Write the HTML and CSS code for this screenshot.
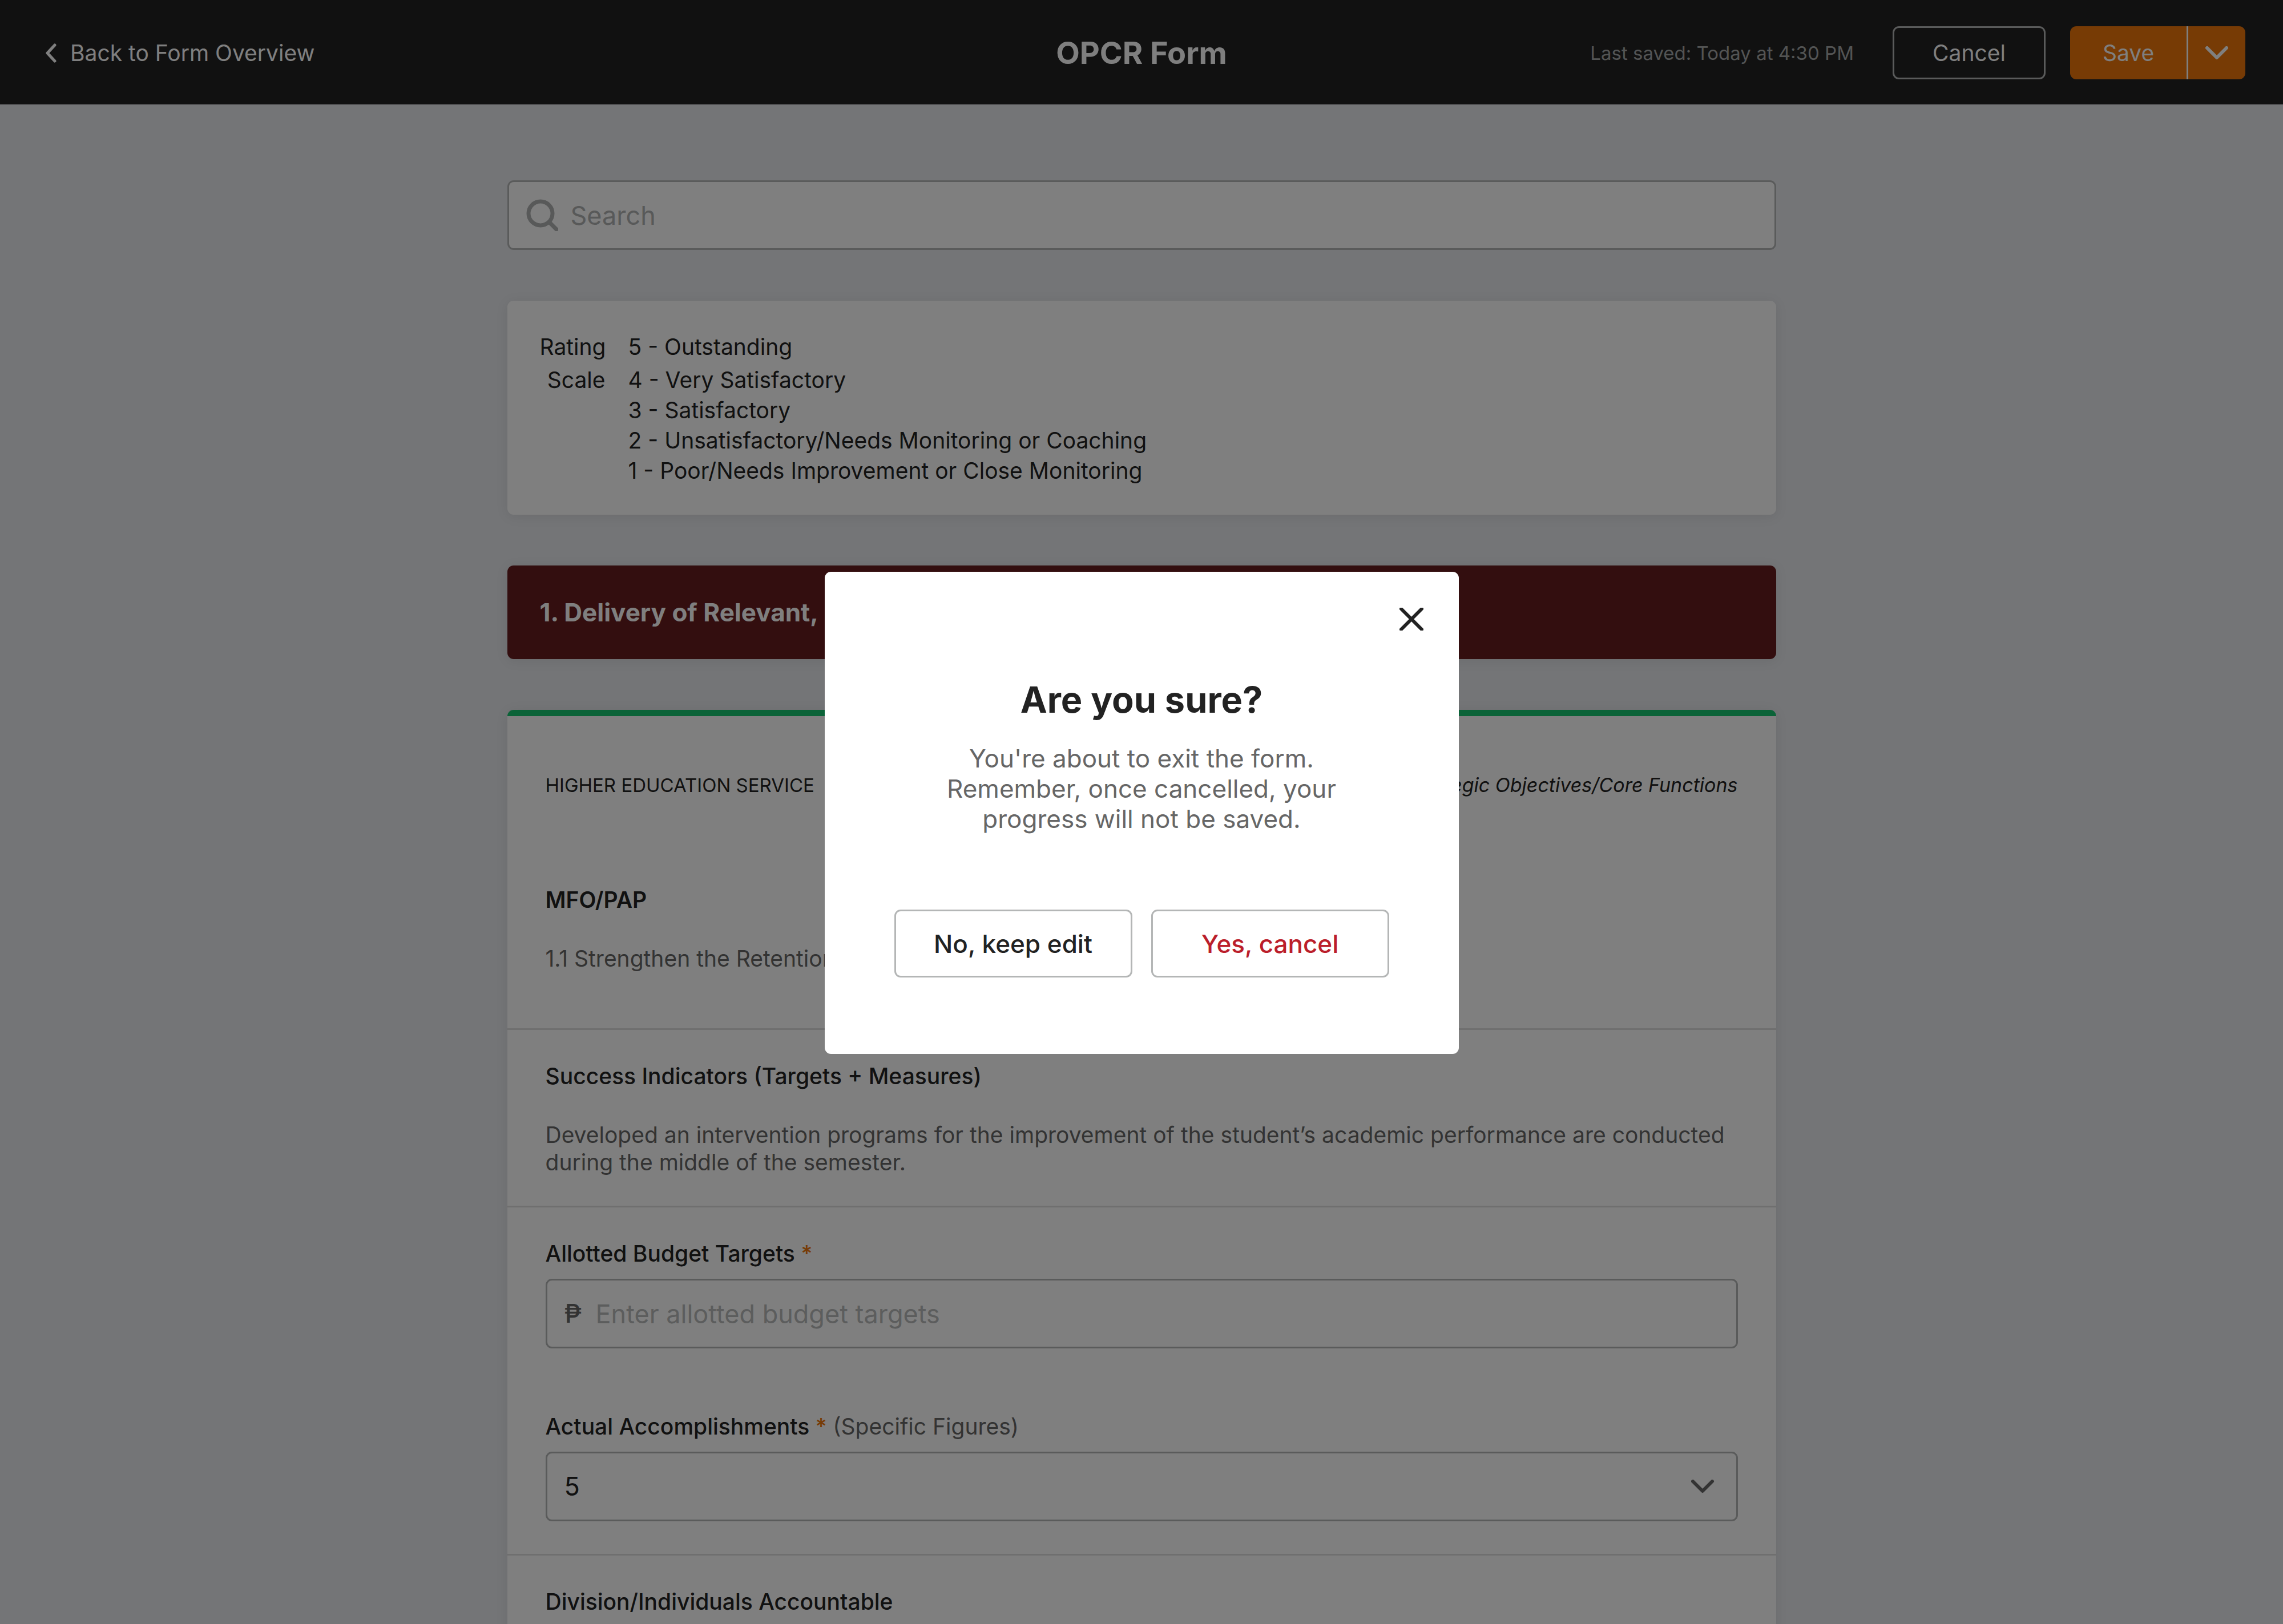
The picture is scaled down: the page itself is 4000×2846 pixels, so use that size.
FILE: index.html
```html
<!DOCTYPE html>
<html lang="en">
<head>
<meta charset="utf-8">
<meta name="viewport" content="width=device-width, initial-scale=1">
<title>OPCR Form</title>
<link rel="stylesheet" href="styles.css">
</head>
<body>
<div class="app">
  <header class="topbar">
    <a class="back" href="#">
      <svg class="back-icon" viewBox="0 0 20 34" aria-hidden="true"><path d="M17 3 4 17l13 14"/></svg>
      Back to Form Overview
    </a>
    <h1 class="topbar-title">OPCR Form</h1>
    <div class="actions">
      <span class="saved">Last saved: Today at 4:30 PM</span>
      <button class="btn-outline" type="button">Cancel</button>
      <div class="split">
        <button class="split-main" type="button">Save</button>
        <button class="split-more" type="button" aria-label="More save options">
          <svg class="chevron" viewBox="0 0 41 24" aria-hidden="true"><path d="M3 3l17 17L37 3"/></svg>
        </button>
      </div>
    </div>
  </header>

  <main class="content">
    <label class="field search">
      <svg class="search-icon" viewBox="0 0 56 56" aria-hidden="true"><circle cx="25" cy="25" r="21"/><path d="M41 41l12 12"/></svg>
      <input class="field-input" type="search" placeholder="Search" aria-label="Search">
    </label>

    <section class="card scale">
      <p class="scale-label">Rating Scale</p>
      <ul class="scale-list">
        <li>5 - Outstanding</li>
        <li>4 - Very Satisfactory</li>
        <li>3 - Satisfactory</li>
        <li>2 - Unsatisfactory/Needs Monitoring or Coaching</li>
        <li>1 - Poor/Needs Improvement or Close Monitoring</li>
      </ul>
    </section>

    <h2 class="banner">1. Delivery of Relevant,</h2>

    <form class="card form">
      <section class="form-section intro">
        <div class="intro-head">
          <span>HIGHER EDUCATION SERVICE</span>
          <em class="category">Strategic Objectives/Core Functions</em>
        </div>
        <h3 class="heading strong">MFO/PAP</h3>
        <p class="copy">1.1 Strengthen the Retention</p>
      </section>
      <section class="form-section indicators">
        <h3 class="heading">Success Indicators (Targets + Measures)</h3>
        <p class="copy">Developed an intervention programs for the improvement of the student’s academic performance are conducted during the middle of the semester.</p>
      </section>
      <section class="form-section inputs">
        <div class="group">
          <label class="heading" for="budget">Allotted Budget Targets <span class="required">*</span></label>
          <div class="field">
            <span class="peso">₱</span>
            <input class="field-input" id="budget" type="text" placeholder="Enter allotted budget targets">
          </div>
        </div>
        <div class="group">
          <label class="heading" for="actual">Actual Accomplishments <span class="required">*</span> <span class="hint">(Specific Figures)</span></label>
          <div class="field">
            <select class="field-input" id="actual"><option>5</option></select>
            <svg class="chevron select-chevron" viewBox="0 0 41 24" aria-hidden="true"><path d="M3 3l17 17L37 3"/></svg>
          </div>
        </div>
      </section>
      <section class="form-section">
        <h3 class="heading">Division/Individuals Accountable</h3>
      </section>
    </form>
  </main>
</div>

<div class="overlay">
  <div class="modal" role="dialog" aria-modal="true" aria-labelledby="modal-title">
    <button class="close" type="button" aria-label="Close">
      <svg class="close-icon" viewBox="0 0 42 40" aria-hidden="true"><path d="M3 2l36 36M39 2L3 38"/></svg>
    </button>
    <h2 class="modal-title" id="modal-title">Are you sure?</h2>
    <p class="modal-text">You're about to exit the form. Remember, once cancelled, your progress will not be saved.</p>
    <div class="modal-actions">
      <button class="modal-btn" type="button">No, keep edit</button>
      <button class="modal-btn danger" type="button">Yes, cancel</button>
    </div>
  </div>
</div>
</body>
</html>
```
FILE: styles.css
```css
:root {
  --ink: #222;
  --muted: #666;
  --line: #b4b6b6;
  --rule: #dedfdf;
  --orange: #ee760a;
  --radius: 11px;
}

* { box-sizing: border-box; margin: 0; padding: 0; }

body {
  font-family: Inter, "Liberation Sans", sans-serif;
  font-size: 39px;
  line-height: 48px;
  color: var(--ink);
  background: #e8eaee;
}

button, input, select { font: inherit; color: inherit; background: none; border: 0; outline: 0; }
button { cursor: pointer; }
svg { fill: none; stroke: currentColor; stroke-linecap: round; stroke-linejoin: round; flex: none; }
h1, h2, h3 { font-size: inherit; }

/* The page behind an open dialog does not scroll. */
.app { height: 100vh; overflow: hidden; }

.topbar {
  display: grid;
  grid-template-columns: 1fr auto 1fr;
  align-items: center;
  height: 183px;
  padding: 2px 66px 0;
  color: #fff;
  background: #222;
}
.back { display: flex; align-items: center; gap: 24px; padding-left: 13px; color: inherit; text-decoration: none; }
.back-icon { width: 20px; height: 34px; stroke-width: 5px; }
.topbar-title { font-size: 54px; line-height: 66px; font-weight: 700; }
.actions { display: flex; align-items: center; justify-content: flex-end; }
.saved { margin-right: 68px; font-size: 33px; color: #a6a8a8; }
.btn-outline {
  width: 268px;
  height: 93px;
  margin-right: 43px;
  border: 3px solid #b4b6b6;
  border-radius: var(--radius);
}
.split { display: flex; height: 93px; border-radius: var(--radius); overflow: hidden; background: var(--orange); }
.split-main { width: 204px; }
.split-more { display: flex; align-items: center; justify-content: center; width: 103px; border-left: 3px solid #fff; }
.chevron { width: 41px; height: 24px; stroke-width: 6px; }

.content {
  display: flex;
  flex-direction: column;
  gap: 89px;
  width: 100%;
  max-width: 2223px;
  margin: 0 auto;
  padding: 133px 0;
}

.card { background: #fff; border-radius: var(--radius); box-shadow: 0 3px 22px rgba(0, 0, 0, .08); }

.field {
  display: flex;
  align-items: center;
  height: 122px;
  padding: 0 30px;
  font-size: 45px;
  background: #fff;
  border: 3px solid var(--line);
  border-radius: var(--radius);
}
.field-input { flex: 1; min-width: 0; height: 100%; appearance: none; }
.field-input::placeholder { color: #b8baba; opacity: 1; }
.search .field-input::placeholder { color: #b0b2b2; }
.search { gap: 22px; }
.search-icon { width: 56px; height: 56px; color: #b0b2b2; stroke-width: 7px; }

.scale { display: grid; grid-template-columns: 115px 1fr; align-items: baseline; gap: 40px; padding: 52px 57px 51px; }
.scale-label { line-height: 58px; text-align: right; }
.scale-list { list-style: none; line-height: 53px; }
.scale-list li:first-child { margin-bottom: 5px; }

.banner {
  padding: 55px 57px;
  font-size: 44px;
  line-height: 54px;
  font-weight: 700;
  color: #fff;
  background: #661c1e;
  border-radius: var(--radius);
  box-shadow: 0 3px 22px rgba(0, 0, 0, .08);
}

.form { overflow: hidden; border-top: 11px solid #16c670; }
.form-section { padding: 57px 67px; }
.form-section + .form-section { border-top: 3px solid var(--rule); }
.intro { padding-top: 101px; padding-bottom: 98px; }
.intro-head { display: flex; justify-content: space-between; margin-bottom: 157px; font-size: 33px; line-height: 40px; }
.category { font-size: 34px; }
.heading { display: block; font-weight: 500; }
.strong { font-weight: 600; }
.copy { margin-top: 55px; color: var(--muted); }
.indicators { padding-bottom: 52px; }
.inputs { display: flex; flex-direction: column; gap: 113px; }
.group { display: flex; flex-direction: column; gap: 20px; }
.required { color: var(--orange); }
.hint { font-weight: 400; color: var(--muted); }
.peso { width: 55px; color: var(--muted); font-weight: 500; }
.select-chevron { margin-right: 8px; color: var(--muted); pointer-events: none; }

.overlay {
  position: fixed;
  inset: 0;
  display: flex;
  align-items: center;
  justify-content: center;
  padding-top: 3px;
  background: rgba(0, 0, 0, .5);
}
.modal {
  display: flex;
  flex-direction: column;
  width: 100%;
  max-width: 1111px;
  padding: 63px 62px 134px;
  text-align: center;
  background: #fff;
  border-radius: var(--radius);
}
.close { display: flex; align-self: flex-end; height: 40px; }
.close-icon { width: 42px; height: 40px; stroke-width: 6px; }
.modal-title { margin-top: 81px; font-size: 63px; line-height: 80px; font-weight: 700; }
.modal-text { width: 740px; margin: 37px auto 0; font-size: 44px; line-height: 53px; color: var(--muted); }
.modal-actions { display: grid; grid-template-columns: 1fr 1fr; gap: 33px; margin: 132px 60px 0; }
.modal-btn { height: 119px; font-size: 44px; font-weight: 500; border: 3px solid var(--line); border-radius: var(--radius); }
.danger { color: #bb1e2b; }
```
